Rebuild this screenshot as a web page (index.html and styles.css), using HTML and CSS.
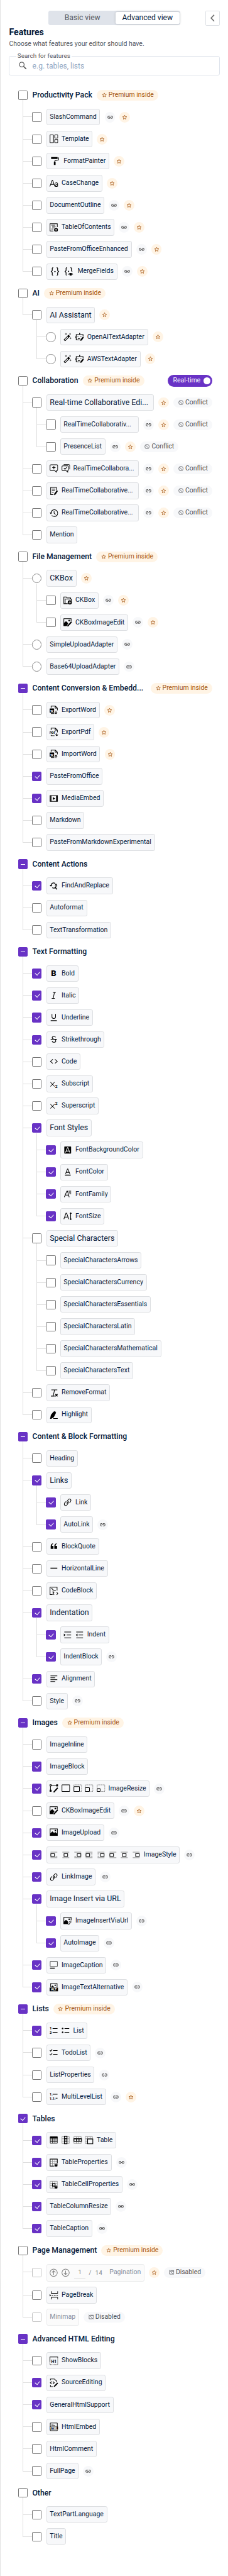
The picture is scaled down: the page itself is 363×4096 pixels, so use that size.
FILE: index.html
```html
<!DOCTYPE html>
<html lang="en">
<head>
<meta charset="utf-8">
<title>Features</title>
<link rel="stylesheet" href="styles.css">
</head>
<body>
<svg class="defs" aria-hidden="true">
<symbol id="star" viewBox="0 0 16 16"><path d="M8 1.8 9.8 6l4.5.4-3.4 3 1 4.4L8 11.400l-3.900 2.400 1-4.400-3.400-3L6.200 6z" stroke-linejoin="round"/></symbol>
<symbol id="dep" viewBox="0 0 16 16"><path d="M7 4.700H4.500a3.300 3.300 0 0 0 0 6.600H7M9 4.700h2.500a3.300 3.300 0 0 1 0 6.600H9M5 8h6"/></symbol>
<symbol id="conflict" viewBox="0 0 16 16"><circle cx="8" cy="8" r="6.800"/><path d="m3.200 3.200 9.600 9.600"/></symbol>
<symbol id="disabled" viewBox="0 0 16 16"><path d="M4.500 2.500h10.700v11M1.700 3v10.700h10.500M.8 1l14 14M7 4.500h8"/></symbol>
<symbol id="search" viewBox="0 0 20 20"><circle cx="7.500" cy="7.500" r="6"/><path d="m12 12 7 7" stroke-width="2.600"/></symbol>
<symbol id="template" viewBox="0 0 20 20"><rect x="1" y=".8" width="8" height="18.200" rx="1"/><rect x="12" y=".8" width="7.200" height="7.200" rx="1"/><rect x="12" y="11.500" width="7.200" height="7.500" rx="1"/></symbol>
<symbol id="painter" viewBox="0 0 20 20"><path d="M1 1h15v4.500H1zM7.500 12h4v8h-4z" fill="#000" stroke="none"/><path d="M16 3h2.500v5l-9 2v3"/></symbol>
<symbol id="case" viewBox="0 0 20 20"><path d="M.5 17 6 2.500h1L12.500 17M2.500 12h8M13.500 9.500c2-2 5.500-1.500 5.500 1V17m0-4.500c-8 0-7 4.500-3.500 4.500 2 0 3.500-1.500 3.500-3"/></symbol>
<symbol id="toc" viewBox="0 0 20 20"><path d="M18 9V1H1v17h8"/><path d="M4 4.500h9M6 7.500h8M6 10.500h6M4 13.500h5" stroke-width="1.200"/><circle cx="15" cy="15.500" r="4.500" fill="#000" stroke="none"/><path d="M15 13v5m-2.500-2.500h5" stroke="#fff" stroke-width="1.200"/></symbol>
<symbol id="merge" viewBox="0 0 20 20"><path d="M6 1C2 1 4.500 4 3.500 8L1 10l2.500 2c1 4-1.500 7 2.500 7M14 1c4 0 1.500 3 2.500 7l2.500 2-2.500 2c-1 4 1.500 7-2.500 7" stroke-width="1.800"/><circle cx="10" cy="10" r="1.700" fill="#000" stroke="none"/></symbol>
<symbol id="mergeprev" viewBox="0 0 20 20"><path d="M6 1C2 1 4.500 4 3.500 8L1 10l2.500 2c1 4-1.500 6 1.500 7M14 1c4 0 1.500 3 2.500 7l1.500 2" stroke-width="1.800"/><circle cx="9.500" cy="9.500" r="1.500" fill="#000" stroke="none"/><path d="M9 17c3-4 8-4 11 0"/><circle cx="14.500" cy="17" r="3" fill="#000" stroke="none"/></symbol>
<symbol id="wand" viewBox="0 0 20 20"><path d="m1.500 16.500 8.500-8.500 2.500 2.500L4 19z"/><path d="m10 8 2-2 2.500 2.500-2 2z" fill="#000"/><path d="M6 1v4M4 3h4M15.500 1v4m-2-2h4M16.500 11v4m-2-2h4" stroke-width="1"/></symbol>
<symbol id="robot" viewBox="0 0 20 20"><path d="M18 8V4.500H2V17h8M10 4V1.500M1 8.500v4" stroke-width="1.600"/><circle cx="10" cy="1.500" r="1.300" fill="#000" stroke="none"/><path d="M6 8v2M13 8v2M6 13c2 1.500 4 1.500 5 0"/><path d="m12 16 6-7 2 2-5 7-3.500 1z" fill="#000" stroke="none"/></symbol>
<symbol id="comment" viewBox="0 0 20 20"><path d="M3 1.500h14a2 2 0 0 1 2 2V13a2 2 0 0 1-2 2h-1v4l-4-4H3a2 2 0 0 1-2-2V3.500a2 2 0 0 1 2-2zM10 4.500v7.500M6.200 8.200h7.600"/></symbol>
<symbol id="comments" viewBox="0 0 20 20"><path d="M3 4h11a2 2 0 0 1 2 2v7a2 2 0 0 1-1.500 2v4l-4-4H3a2 2 0 0 1-2-2V6a2 2 0 0 1 2-2zM5 1.200h12a2.200 2.200 0 0 1 2.200 2.200V12M5.500 9.500l2.500 2.500 4.500-5"/></symbol>
<symbol id="track" viewBox="0 0 20 20"><path d="M16 8V1.500H2.500v17H9M5.500 5.500h8M5.500 9h7M5.500 12.500h4"/><path d="m11 16 6-8 2.500 2-5.500 8-3.500 2z" fill="#000" stroke="none"/></symbol>
<symbol id="history" viewBox="0 0 20 20"><path d="M3 10a8 8 0 1 1 2 5.500M10.500 5v5.500l3.500 3"/><path d="M0 9h6l-3 4z" fill="#000" stroke="none"/></symbol>
<symbol id="ckbox" viewBox="0 0 20 20"><path d="M10 17.500H1V2h6l1.500 2H17v3M4 17V6.500h14.500V11"/><circle cx="15" cy="14.500" r="5" fill="#000" stroke="none"/><path d="M15 11.800v5.400M12.300 14.500h5.400" stroke="#fff" stroke-width="1.200"/></symbol>
<symbol id="imgedit" viewBox="0 0 20 20"><path d="M18 7V1.200H1V17h7"/><circle cx="13.500" cy="5.500" r="2" fill="#000" stroke="none"/><path d="M1 12.500 6 8l4.500 4L7 17.500H1z" fill="#000"/><path d="m9.500 19 9.500-10.500" stroke-width="3"/></symbol>
<symbol id="word" viewBox="0 0 20 20"><path d="M3.500 5V1.200h10L18.200 6v5M13 1.500V6h5M3 18.800h8"/><rect y="6.500" width="10.500" height="10" rx="1" fill="#000" stroke="none"/><text x="5.200" y="14.600" text-anchor="middle" font-size="9" font-weight="700" fill="#fff" stroke="none">w</text></symbol>
<symbol id="expword" viewBox="0 0 20 20"><use href="#word"/><path d="M14.800 12v7m-3-3 3 3.200 3-3.200"/></symbol>
<symbol id="impword" viewBox="0 0 20 20"><use href="#word"/><path d="M14.800 20v-7m-3 3 3-3.200 3 3.200"/></symbol>
<symbol id="exppdf" viewBox="0 0 20 20"><path d="M3.500 6V1.200h10L18.200 6v5M13 1.500V6h5M3.500 17v2h8M16.800 13v6m-3-3 3 3.200 3-3.200"/><text x="-.3" y="14.700" font-size="7.500" font-weight="900" fill="#000" stroke="none">PDF</text></symbol>
<symbol id="media" viewBox="0 0 20 20"><rect x="1" y="3" width="17.500" height="13.500"/><path d="M3 3v13.500M16.500 3v13.500" stroke-width="2.500"/><path d="m7.500 6.500 6 3.300-6 3.300z" fill="#000" stroke="none"/></symbol>
<symbol id="find" viewBox="0 0 20 20"><path d="M3.500 8C4 3 10 1 13 4.500M6 14c4 2 9 1 9.500-5M12.500 13l5 5" stroke-width="2"/><path d="M0 7.500h6.500L3 11.500zM11.500 8.500h6.800L15 4.500z" fill="#000" stroke="none"/></symbol>
<symbol id="bold" viewBox="0 0 20 20"><text x="9.500" y="16.600" text-anchor="middle" font-size="19" font-weight="900" fill="#000" stroke="none">B</text></symbol>
<symbol id="italic" viewBox="0 0 20 20"><path d="M7.500 3h7M5 17h7M11.200 3 8.500 17"/></symbol>
<symbol id="underline" viewBox="0 0 20 20"><path d="M5.500 2v6.500c0 5.500 8.500 5.500 8.500 0V2M2.500 17.500h14.500"/></symbol>
<symbol id="strike" viewBox="0 0 20 20"><path d="M14 5c-1-3-8-3-8 1 0 2 2 3 4 3.500M6 13.500c0 4 8.500 4 8.500 0 0-2-1-3-2.500-3.500M2.500 9.500h15"/></symbol>
<symbol id="code" viewBox="0 0 20 20"><path d="M7.500 5 2 9.800l5.500 4.800M12.500 5 18 9.800l-5.500 4.800"/></symbol>
<symbol id="sub" viewBox="0 0 20 20"><path d="m2 5.500 9.500 10M11.500 5.500 2 15.500"/><text x="13" y="18.500" font-size="10" font-weight="700" fill="#000" stroke="none">2</text></symbol>
<symbol id="sup" viewBox="0 0 20 20"><path d="m2 5.500 9.500 10M11.500 5.500 2 15.500"/><text x="13" y="8" font-size="10" font-weight="700" fill="#000" stroke="none">2</text></symbol>
<symbol id="fbg" viewBox="0 0 20 20"><rect x="2" y="1.500" width="16" height="16.500" rx="1" fill="#000" stroke="none"/><path d="M5 15.500 9.500 4h1L15 15.500M6.500 12h7" stroke="#fff"/></symbol>
<symbol id="fcolor" viewBox="0 0 20 20"><path d="M5 14 9.500 2.500h1L15 14M6.500 10.500h7"/><path d="M3.500 17h13.500" stroke-width="2"/></symbol>
<symbol id="ffam" viewBox="0 0 20 20"><path d="M2 17 8 3h1.500l4 14M4 12h8M12 3h6M13 6h5M14 9h4"/></symbol>
<symbol id="fsize" viewBox="0 0 20 20"><path d="M1 17 6 3h1.500l5 14M3 12h8M17 2.500v15M15 4l2-2 2 2M15 16l2 2 2-2"/></symbol>
<symbol id="remove" viewBox="0 0 20 20"><path d="M4 3h14M11.500 3 8.500 17M3 17.500h9"/><path d="m13.500 13 5 5m0-5-5 5" stroke-width="2"/></symbol>
<symbol id="highl" viewBox="0 0 20 20"><path d="M9 2.500 13 1l2 4-5 10-6 4H1l2-9z" fill="#000" stroke="none"/><path d="M8.500 18.500H19"/></symbol>
<symbol id="link" viewBox="0 0 20 20"><path d="M8 9.500c-1 1 1-3 3-5.500 3.500-4.500 8.500 0 5.500 4.500l-2.300 3M11.500 10c1-1-1 3-3 5.800-3.500 4.500-8.500 0-5.500-4.500l2.500-3M8 13l4-6"/></symbol>
<symbol id="quote" viewBox="0 0 20 20"><path d="M2.500 10c0-4 2-6.500 5.500-7v1.500C6 5.500 5.500 7 5.500 9h3.500v7H2.500zM11 10c0-4 2-6.500 5.500-7v1.500c-2 1-2.500 2.500-2.500 4.500h3.500v7H11z" fill="#000" stroke="none"/></symbol>
<symbol id="hr" viewBox="0 0 20 20"><path d="M2 9.500h16" stroke-width="2"/></symbol>
<symbol id="codeblock" viewBox="0 0 20 20"><path d="M17.500 9V1H1v17.500h6M3 4.500h4M6 7h3M8.500 9.500h6M6.500 12h4M10.500 13 8 16l2.500 3M16.500 13l3 3-3 3"/></symbol>
<symbol id="indent" viewBox="0 0 20 20"><path d="M2 3h16M7.500 9.800H18M2 16.500h16"/><path d="M1 6.500 5 9.800 1 13z" fill="#000" stroke="none"/></symbol>
<symbol id="outdent" viewBox="0 0 20 20"><path d="M2 3h16M7.500 9.800H18M2 16.500h16"/><path d="M5 6.500 1 9.800 5 13z" fill="#000" stroke="none"/></symbol>
<symbol id="align" viewBox="0 0 20 20"><path d="M2 2.500h16M2 7h11M2 11.500h16M2 16h11"/></symbol>
<symbol id="resize" viewBox="0 0 20 20"><path d="M2 2.500h15M2 4v12"/><path d="M15.500.5h4.500v4.500h-4.500zM0 13h4.500v4.500H0z" fill="#000" stroke="none"/><path d="M.8 1.200h3v3h-3z" fill="#fff"/><path d="m9.500 19 9.500-10.500" stroke-width="3"/></symbol>
<symbol id="rfull" viewBox="0 0 20 20"><rect x="1" y="1.500" width="18" height="15.500" rx=".8"/></symbol>
<symbol id="rlarge" viewBox="0 0 20 20"><rect x="1" y="5.500" width="13" height="11.500" rx=".8"/><path d="M1 4V1.500h18V17h-3" stroke-width="1" stroke-dasharray="1 1"/></symbol>
<symbol id="rmed" viewBox="0 0 20 20"><rect x="1" y="8" width="10" height="9" rx=".8"/><path d="M1 6V1.500h18V17h-6" stroke-width="1" stroke-dasharray="1 1"/></symbol>
<symbol id="rsmall" viewBox="0 0 20 20"><rect x="1" y="10.500" width="7" height="6.500" rx=".8"/><path d="M1 8V1.500h18V17h-9" stroke-width="1" stroke-dasharray="1 1"/></symbol>
<symbol id="image" viewBox="0 0 20 20"><rect x="1.200" y="1.500" width="17" height="15.500"/><circle cx="13.500" cy="5.500" r="1.900" fill="#000" stroke="none"/><path d="m1.500 12 5-4.500 4 3.500 3-2 4.500 4v4H1.500z" fill="#000" stroke="none"/></symbol>
<symbol id="s1" viewBox="0 0 20 20"><path d="M2 3h16M2 16h16M14 12.500h4" stroke="#777" stroke-width="1.200"/><rect x="2.800" y="6.500" width="8.500" height="6.500"/></symbol>
<symbol id="s2" viewBox="0 0 20 20"><path d="M2 3h16M2 16h16" stroke="#777" stroke-width="1.200"/><rect x="5.800" y="6.500" width="8.500" height="6.500"/></symbol>
<symbol id="s3" viewBox="0 0 20 20"><path d="M2 3h16M2 16h16M2 12.500h4" stroke="#777" stroke-width="1.200"/><rect x="8.800" y="6.500" width="8.500" height="6.500"/></symbol>
<symbol id="s4" viewBox="0 0 20 20"><path d="M2 3h16M2 16h16M14 6h4M14 9.500h4M14 13h4" stroke="#777" stroke-width="1.200"/><rect x="2.800" y="6.500" width="8.500" height="6.500"/></symbol>
<symbol id="s5" viewBox="0 0 20 20"><path d="M2 3h16M2 16h16M2 6h4M2 9.500h4M2 13h4" stroke="#777" stroke-width="1.200"/><rect x="8.800" y="6.500" width="8.500" height="6.500"/></symbol>
<symbol id="s6" viewBox="0 0 20 20"><path d="M2 3h16M2 16h16" stroke="#777" stroke-width="1.200"/><rect x="2.800" y="6.500" width="8.500" height="6.500"/></symbol>
<symbol id="s8" viewBox="0 0 20 20"><path d="M2 3h16M2 16h16" stroke="#777" stroke-width="1.200"/><rect x="8.800" y="6.500" width="8.500" height="6.500"/></symbol>
<symbol id="imgurl" viewBox="0 0 20 20"><path d="M18 8V1.200H1V16h9"/><circle cx="13.500" cy="5.500" r="1.900" fill="#000" stroke="none"/><path d="M1 12 6 8l4 3v5H1z" fill="#000"/><path d="m13 13 1.500-2.500c1.500-1.500 4 0 3 2l-1.500 2.500M15 14l-1.500 3.500c-1.500 1.500-3.500 0-2.500-2" stroke-width="1.300"/></symbol>
<symbol id="caption" viewBox="0 0 20 20"><rect x="1.300" y="1.300" width="17" height="11.500" rx="1" stroke="#555"/><path d="M1 17h11" stroke-width="2"/></symbol>
<symbol id="alt" viewBox="0 0 20 20"><path d="M2.500 10V1.500h15V10"/><circle cx="13" cy="5.500" r="1.700" fill="#000" stroke="none"/><path d="m4 10 3-3 3 3" fill="#000"/><rect y="11" width="20" height="9" fill="#000" stroke="none"/><text x="10" y="18.300" text-anchor="middle" font-size="8.200" font-weight="700" fill="#fff" stroke="none">ALT</text></symbol>
<symbol id="numlist" viewBox="0 0 20 20"><path d="M7 5h11.500M7 14h11.500"/><text x="0" y="7.500" font-size="8.500" font-weight="800" fill="#000" stroke="none">1</text><text x="0" y="17.500" font-size="8.500" font-weight="800" fill="#000" stroke="none">2</text></symbol>
<symbol id="bullist" viewBox="0 0 20 20"><path d="M7 5h11M7 14h11"/><circle cx="2.500" cy="5" r="1.800" fill="#000" stroke="none"/><circle cx="2.500" cy="14" r="1.800" fill="#000" stroke="none"/></symbol>
<symbol id="todolist" viewBox="0 0 20 20"><path d="M8 5h10.500M8 14h10.500M.5 4.500l2 2 3.500-4M.5 13.500l2 2 3.500-4"/></symbol>
<symbol id="multilist" viewBox="0 0 20 20"><path d="M7 4.500h11.500M14 13.500h4.500"/><text x="0" y="7.500" font-size="8" font-weight="800" fill="#000" stroke="none">1.</text><text x="0" y="17" font-size="8" font-weight="800" fill="#000" stroke="none">1.1.</text></symbol>
<symbol id="grid" viewBox="0 0 20 20"><path d="M1 2h17v16H1zM1 7h17M1 12.500h17M6.700 2v16M12.400 2v16" stroke="#888" stroke-width="1.200"/></symbol>
<symbol id="table" viewBox="0 0 20 20"><path d="M1.500 2.500h16.500v15H1.500zM1.500 10h16.500M1.500 14h16.500M7 6v11.500M12.500 6v11.500" stroke-width="1.300"/><path d="M1 2h17.500v4.500H1z" fill="#000" stroke="none"/></symbol>
<symbol id="tcol" viewBox="0 0 20 20"><use href="#grid"/><path d="M6.700 1h6v18h-6zM6.700 7h6M6.700 12.500h6" stroke-width="1.900"/></symbol>
<symbol id="trow" viewBox="0 0 20 20"><use href="#grid"/><path d="M1 7h18v6H1zM7 7v6M13 7v6" stroke-width="1.900"/></symbol>
<symbol id="tmerge" viewBox="0 0 20 20"><use href="#grid"/><path d="M6.500 7.500h12.500v11.500H6.500z" fill="#f7f8fa" stroke-width="1.900"/></symbol>
<symbol id="tprops" viewBox="0 0 20 20"><use href="#grid"/><path d="M10 18H1.200V1.500H18V11"/><path d="m15 11.500 1.500 3 3.500.3-2.600 2.200.8 3-3.200-1.600-3.200 1.600.8-3-2.600-2.200 3.500-.3z" fill="#000" stroke="none"/></symbol>
<symbol id="tcell" viewBox="0 0 20 20"><use href="#grid"/><path d="M6.700 7.500h6v6h-6z" stroke-width="1.900"/><path d="m15 11.500 1.500 3 3.500.3-2.600 2.200.8 3-3.200-1.600-3.200 1.600.8-3-2.600-2.200 3.500-.3z" fill="#000" stroke="none"/></symbol>
<symbol id="up" viewBox="0 0 20 20"><circle cx="9.500" cy="10" r="8.500"/><path d="M9.500 15V5.500m-4 4 4-4 4 4"/></symbol>
<symbol id="down" viewBox="0 0 20 20"><circle cx="9.500" cy="10" r="8.500"/><path d="M9.500 5v9.500m-4-4 4 4 4-4"/></symbol>
<symbol id="pbreak" viewBox="0 0 20 20"><path d="M4 .5V5h15V.5M4 19.500V14.500h15v5M5 9.800h3.500m2 0H14m2 0h3.500"/><path d="m0 7 3.500 2.800L0 12.500z" fill="#000" stroke="none"/></symbol>
<symbol id="showblocks" viewBox="0 0 20 20"><path d="M.8 13V1h18.400v3"/><path d="M19.200 5v14H.8v-5" stroke-dasharray="1.500 1.500"/><text x="10" y="14" text-anchor="middle" font-size="10" font-weight="700" fill="#000" stroke="none">H1</text></symbol>
<symbol id="source" viewBox="0 0 20 20"><path d="M2 4V1h9l5.500 5v3M2 15v4h6M5 7 1.500 10 5 13M7.500 7l3.500 3-3.500 3"/><path d="m10.500 19 8.500-8.500" stroke-width="3"/></symbol>
<symbol id="htmlembed" viewBox="0 0 20 20"><rect x="1.500" y="1" width="16.500" height="18" rx="1"/><path d="M4 4h5M4 6.500h9" stroke-width="1"/><path d="M0 9.500h20v7H0z" fill="#000" stroke="none"/><text x="10" y="15.600" text-anchor="middle" font-size="6.700" font-weight="800" fill="#fff" stroke="none">HTML</text></symbol>
</svg>
<main>
<header>
<div class="toggle"><span>Basic view</span><span class="on">Advanced view</span></div>
<button class="back"><svg viewBox="0 0 12 20"><path d="M10.500 1 2 10l8.500 9"/></svg></button>
</header>
<h1>Features</h1>
<p>Choose what features your editor should have.</p>
<fieldset><legend>Search for features</legend><svg><use href="#search"/></svg><span>e.g. tables, lists</span></fieldset>

<h2><i></i><span>Productivity Pack</span><em><svg><use href="#star"/></svg>Premium inside</em></h2>
<ul>
<li><div><i></i><span>SlashCommand</span><svg class="dep"><use href="#dep"/></svg><svg class="star"><use href="#star"/></svg></div></li>
<li><div><i></i><span><svg><use href="#template"/></svg>Template</span><svg class="star"><use href="#star"/></svg></div></li>
<li><div><i></i><span class="wide"><svg><use href="#painter"/></svg>FormatPainter</span><svg class="star"><use href="#star"/></svg></div></li>
<li><div><i></i><span><svg><use href="#case"/></svg>CaseChange</span><svg class="star"><use href="#star"/></svg></div></li>
<li><div><i></i><span>DocumentOutline</span><svg class="dep"><use href="#dep"/></svg><svg class="star"><use href="#star"/></svg></div></li>
<li><div><i></i><span><svg><use href="#toc"/></svg>TableOfContents</span><svg class="dep"><use href="#dep"/></svg><svg class="star"><use href="#star"/></svg></div></li>
<li><div><i></i><span>PasteFromOfficeEnhanced</span><svg class="dep"><use href="#dep"/></svg><svg class="star"><use href="#star"/></svg></div></li>
<li><div><i></i><span class="wide"><svg><use href="#merge"/></svg><svg><use href="#mergeprev"/></svg>MergeFields</span><svg class="dep"><use href="#dep"/></svg><svg class="star"><use href="#star"/></svg></div></li>
</ul>

<h2><i></i><span>AI</span><em><svg><use href="#star"/></svg>Premium inside</em></h2>
<ul>
<li><div><i></i><span class="group">AI Assistant</span><svg class="star"><use href="#star"/></svg></div>
<ul>
<li><div><i class="radio"></i><span><svg><use href="#wand"/></svg><svg><use href="#robot"/></svg>OpenAITextAdapter</span><svg class="star"><use href="#star"/></svg></div></li>
<li><div><i class="radio"></i><span><svg><use href="#wand"/></svg><svg><use href="#robot"/></svg>AWSTextAdapter</span><svg class="star"><use href="#star"/></svg></div></li>
</ul></li>
</ul>

<h2><i></i><span>Collaboration</span><em><svg><use href="#star"/></svg>Premium inside</em><strong>Real-time<b></b></strong></h2>
<ul>
<li><div><i></i><span class="group fill">Real-time Collaborative Edi...</span><svg class="star"><use href="#star"/></svg><em class="gray"><svg><use href="#conflict"/></svg>Conflict</em></div>
<ul>
<li><div><i></i><span class="fill">RealTimeCollaborativ...</span><svg class="dep"><use href="#dep"/></svg><svg class="star"><use href="#star"/></svg><em class="gray"><svg><use href="#conflict"/></svg>Conflict</em></div></li>
<li><div><i></i><span>PresenceList</span><svg class="dep"><use href="#dep"/></svg><svg class="star"><use href="#star"/></svg><em class="gray"><svg><use href="#conflict"/></svg>Conflict</em></div></li>
</ul></li>
<li><div><i></i><span class="fill"><svg><use href="#comment"/></svg><svg><use href="#comments"/></svg>RealTimeCollabora...</span><svg class="dep"><use href="#dep"/></svg><svg class="star"><use href="#star"/></svg><em class="gray"><svg><use href="#conflict"/></svg>Conflict</em></div></li>
<li><div><i></i><span class="fill"><svg><use href="#track"/></svg>RealTimeCollaborative...</span><svg class="dep"><use href="#dep"/></svg><svg class="star"><use href="#star"/></svg><em class="gray"><svg><use href="#conflict"/></svg>Conflict</em></div></li>
<li><div><i></i><span class="fill"><svg><use href="#history"/></svg>RealTimeCollaborative...</span><svg class="dep"><use href="#dep"/></svg><svg class="star"><use href="#star"/></svg><em class="gray"><svg><use href="#conflict"/></svg>Conflict</em></div></li>
<li><div><i></i><span>Mention</span></div></li>
</ul>

<h2><i></i><span>File Management</span><em><svg><use href="#star"/></svg>Premium inside</em></h2>
<ul>
<li><div><i class="radio"></i><span class="group">CKBox</span><svg class="star"><use href="#star"/></svg></div>
<ul>
<li><div><i></i><span><svg><use href="#ckbox"/></svg>CKBox</span><svg class="dep"><use href="#dep"/></svg><svg class="star"><use href="#star"/></svg></div></li>
<li><div><i></i><span><svg><use href="#imgedit"/></svg>CKBoxImageEdit</span><svg class="dep"><use href="#dep"/></svg><svg class="star"><use href="#star"/></svg></div></li>
</ul></li>
<li><div><i class="radio"></i><span>SimpleUploadAdapter</span><svg class="dep"><use href="#dep"/></svg></div></li>
<li><div><i class="radio"></i><span>Base64UploadAdapter</span><svg class="dep"><use href="#dep"/></svg></div></li>
</ul>

<h2><i class="some"></i><span>Content Conversion &amp; Embedd...</span><em class="end"><svg><use href="#star"/></svg>Premium inside</em></h2>
<ul>
<li><div><i></i><span><svg><use href="#expword"/></svg>ExportWord</span><svg class="star"><use href="#star"/></svg></div></li>
<li><div><i></i><span><svg><use href="#exppdf"/></svg>ExportPdf</span><svg class="star"><use href="#star"/></svg></div></li>
<li><div><i></i><span><svg><use href="#impword"/></svg>ImportWord</span><svg class="star"><use href="#star"/></svg></div></li>
<li><div><i class="all"></i><span>PasteFromOffice</span></div></li>
<li><div><i class="all"></i><span><svg><use href="#media"/></svg>MediaEmbed</span></div></li>
<li><div><i></i><span>Markdown</span></div></li>
<li><div><i></i><span>PasteFromMarkdownExperimental</span></div></li>
</ul>

<h2><i class="some"></i><span>Content Actions</span></h2>
<ul>
<li><div><i class="all"></i><span><svg><use href="#find"/></svg>FindAndReplace</span></div></li>
<li><div><i></i><span>Autoformat</span></div></li>
<li><div><i></i><span>TextTransformation</span></div></li>
</ul>

<h2><i class="some"></i><span>Text Formatting</span></h2>
<ul>
<li><div><i class="all"></i><span><svg><use href="#bold"/></svg>Bold</span></div></li>
<li><div><i class="all"></i><span><svg><use href="#italic"/></svg>Italic</span></div></li>
<li><div><i class="all"></i><span><svg><use href="#underline"/></svg>Underline</span></div></li>
<li><div><i class="all"></i><span><svg><use href="#strike"/></svg>Strikethrough</span></div></li>
<li><div><i></i><span><svg><use href="#code"/></svg>Code</span></div></li>
<li><div><i></i><span><svg><use href="#sub"/></svg>Subscript</span></div></li>
<li><div><i></i><span><svg><use href="#sup"/></svg>Superscript</span></div></li>
<li><div><i class="all"></i><span class="group">Font Styles</span></div>
<ul>
<li><div><i class="all"></i><span><svg><use href="#fbg"/></svg>FontBackgroundColor</span></div></li>
<li><div><i class="all"></i><span><svg><use href="#fcolor"/></svg>FontColor</span></div></li>
<li><div><i class="all"></i><span><svg><use href="#ffam"/></svg>FontFamily</span></div></li>
<li><div><i class="all"></i><span><svg><use href="#fsize"/></svg>FontSize</span></div></li>
</ul></li>
<li><div><i></i><span class="group">Special Characters</span></div>
<ul>
<li><div><i></i><span>SpecialCharactersArrows</span></div></li>
<li><div><i></i><span>SpecialCharactersCurrency</span></div></li>
<li><div><i></i><span>SpecialCharactersEssentials</span></div></li>
<li><div><i></i><span>SpecialCharactersLatin</span></div></li>
<li><div><i></i><span>SpecialCharactersMathematical</span></div></li>
<li><div><i></i><span>SpecialCharactersText</span></div></li>
</ul></li>
<li><div><i></i><span><svg><use href="#remove"/></svg>RemoveFormat</span></div></li>
<li><div><i></i><span><svg><use href="#highl"/></svg>Highlight</span></div></li>
</ul>

<h2><i class="some"></i><span>Content &amp; Block Formatting</span></h2>
<ul>
<li><div><i></i><span>Heading</span></div></li>
<li><div><i class="all"></i><span class="group">Links</span></div>
<ul>
<li><div><i class="all"></i><span><svg><use href="#link"/></svg>Link</span></div></li>
<li><div><i class="all"></i><span>AutoLink</span><svg class="dep"><use href="#dep"/></svg></div></li>
</ul></li>
<li><div><i></i><span><svg><use href="#quote"/></svg>BlockQuote</span></div></li>
<li><div><i></i><span><svg><use href="#hr"/></svg>HorizontalLine</span></div></li>
<li><div><i></i><span><svg><use href="#codeblock"/></svg>CodeBlock</span></div></li>
<li><div><i class="all"></i><span class="group">Indentation</span></div>
<ul>
<li><div><i class="all"></i><span><svg><use href="#indent"/></svg><svg><use href="#outdent"/></svg>Indent</span></div></li>
<li><div><i class="all"></i><span>IndentBlock</span><svg class="dep"><use href="#dep"/></svg></div></li>
</ul></li>
<li><div><i class="all"></i><span><svg><use href="#align"/></svg>Alignment</span></div></li>
<li><div><i></i><span>Style</span><svg class="dep"><use href="#dep"/></svg></div></li>
</ul>

<h2><i class="some"></i><span>Images</span><em><svg><use href="#star"/></svg>Premium inside</em></h2>
<ul>
<li><div><i></i><span>ImageInline</span></div></li>
<li><div><i class="all"></i><span>ImageBlock</span></div></li>
<li><div><i class="all"></i><span><svg><use href="#resize"/></svg><svg><use href="#rfull"/></svg><svg><use href="#rlarge"/></svg><svg><use href="#rmed"/></svg><svg><use href="#rsmall"/></svg>ImageResize</span><svg class="dep"><use href="#dep"/></svg></div></li>
<li><div><i></i><span><svg><use href="#imgedit"/></svg>CKBoxImageEdit</span><svg class="dep"><use href="#dep"/></svg><svg class="star"><use href="#star"/></svg></div></li>
<li><div><i class="all"></i><span><svg><use href="#image"/></svg>ImageUpload</span><svg class="dep"><use href="#dep"/></svg></div></li>
<li><div><i class="all"></i><span><svg><use href="#s1"/></svg><svg><use href="#s2"/></svg><svg><use href="#s3"/></svg><svg><use href="#s4"/></svg><svg><use href="#s5"/></svg><svg><use href="#s6"/></svg><svg><use href="#s2"/></svg><svg><use href="#s8"/></svg>ImageStyle</span><svg class="dep"><use href="#dep"/></svg></div></li>
<li><div><i class="all"></i><span><svg><use href="#link"/></svg>LinkImage</span><svg class="dep"><use href="#dep"/></svg></div></li>
<li><div><i class="all"></i><span class="group">Image Insert via URL</span></div>
<ul>
<li><div><i class="all"></i><span><svg><use href="#imgurl"/></svg>ImageInsertViaUrl</span><svg class="dep"><use href="#dep"/></svg></div></li>
<li><div><i class="all"></i><span>AutoImage</span><svg class="dep"><use href="#dep"/></svg></div></li>
</ul></li>
<li><div><i class="all"></i><span><svg><use href="#caption"/></svg>ImageCaption</span><svg class="dep"><use href="#dep"/></svg></div></li>
<li><div><i class="all"></i><span><svg><use href="#alt"/></svg>ImageTextAlternative</span><svg class="dep"><use href="#dep"/></svg></div></li>
</ul>

<h2><i class="some"></i><span>Lists</span><em><svg><use href="#star"/></svg>Premium inside</em></h2>
<ul>
<li><div><i class="all"></i><span><svg><use href="#numlist"/></svg><svg><use href="#bullist"/></svg>List</span></div></li>
<li><div><i></i><span><svg><use href="#todolist"/></svg>TodoList</span><svg class="dep"><use href="#dep"/></svg></div></li>
<li><div><i></i><span>ListProperties</span><svg class="dep"><use href="#dep"/></svg></div></li>
<li><div><i></i><span><svg><use href="#multilist"/></svg>MultiLevelList</span><svg class="dep"><use href="#dep"/></svg><svg class="star"><use href="#star"/></svg></div></li>
</ul>

<h2><i class="all"></i><span>Tables</span></h2>
<ul>
<li><div><i class="all"></i><span><svg><use href="#table"/></svg><svg><use href="#tcol"/></svg><svg><use href="#trow"/></svg><svg><use href="#tmerge"/></svg>Table</span></div></li>
<li><div><i class="all"></i><span><svg><use href="#tprops"/></svg>TableProperties</span><svg class="dep"><use href="#dep"/></svg></div></li>
<li><div><i class="all"></i><span><svg><use href="#tcell"/></svg>TableCellProperties</span><svg class="dep"><use href="#dep"/></svg></div></li>
<li><div><i class="all"></i><span>TableColumnResize</span><svg class="dep"><use href="#dep"/></svg></div></li>
<li><div><i class="all"></i><span>TableCaption</span><svg class="dep"><use href="#dep"/></svg></div></li>
</ul>

<h2><i></i><span>Page Management</span><em><svg><use href="#star"/></svg>Premium inside</em></h2>
<ul>
<li><div class="off tall"><i></i><span><svg><use href="#up"/></svg><svg><use href="#down"/></svg><u>1</u><small>/&nbsp; 14</small>Pagination</span><svg class="star"><use href="#star"/></svg><em class="gray"><svg><use href="#disabled"/></svg>Disabled</em></div></li>
<li><div><i></i><span><svg><use href="#pbreak"/></svg>PageBreak</span></div></li>
<li><div class="off"><i></i><span>Minimap</span><em class="gray"><svg><use href="#disabled"/></svg>Disabled</em></div></li>
</ul>

<h2><i class="some"></i><span>Advanced HTML Editing</span></h2>
<ul>
<li><div><i></i><span><svg><use href="#showblocks"/></svg>ShowBlocks</span></div></li>
<li><div><i class="all"></i><span><svg><use href="#source"/></svg>SourceEditing</span></div></li>
<li><div><i class="all"></i><span>GeneralHtmlSupport</span></div></li>
<li><div><i></i><span><svg><use href="#htmlembed"/></svg>HtmlEmbed</span></div></li>
<li><div><i></i><span>HtmlComment</span></div></li>
<li><div><i></i><span>FullPage</span><svg class="dep"><use href="#dep"/></svg></div></li>
</ul>

<h2><i></i><span>Other</span></h2>
<ul>
<li><div><i></i><span>TextPartLanguage</span></div></li>
<li><div><i></i><span>Title</span></div></li>
</ul>
</main>
</body>
</html>
```
FILE: styles.css
```css
/* 1rem = 100 design pixels */
html { font-size: 56.614px; background: #fff; }
* { box-sizing: border-box; }
body { margin: 0; font-family: Roboto, "Liberation Sans", sans-serif; font-size: .186rem; color: #061a3a; line-height: 1; overflow: hidden; }
.defs { display: none; }
main { height: 4096px; border-left: 1px solid #e2e2e2; padding: .3rem .225rem 0 .237rem; }
svg { fill: none; stroke: currentColor; stroke-width: 1.5; flex: none; overflow: visible; }

header { display: flex; justify-content: flex-end; height: .42rem; }
.toggle { display: flex; width: 3.72rem; height: .4rem; padding: .035rem .03rem; background: #dfe3ea; border-radius: .06rem; font-size: .214rem; color: #55585e; margin-right: .69rem; }
.toggle span { flex: 1; display: flex; align-items: center; justify-content: center; white-space: nowrap; }
.toggle .on { flex: 0 0 1.8rem; background: #fff; border-radius: .05rem; color: #061a3a; box-shadow: 0 0 .07rem #0003; }
.back { width: .42rem; height: .42rem; padding: 0; border: 1px solid #dfe2e6; border-radius: .03rem; background: #fff; color: #707070; display: flex; align-items: center; justify-content: center; }
.back svg { width: .12rem; height: .2rem; stroke-width: 3; }

h1 { margin: .07rem 0 0; font-size: .25rem; line-height: .24rem; font-weight: 700; }
p { margin: .08rem 0 0; font-size: .185rem; line-height: .24rem; color: #55585e; }
fieldset { margin: .14rem 0 0; padding: 0 0 .08rem .25rem; height: .635rem; border: 1px solid #dfe4ec; border-radius: .05rem; display: flex; align-items: center; gap: .17rem; color: #93a8c3; font-size: .212rem; min-width: 0; }
legend { margin-left: -.07rem; padding: 0 .04rem; font-size: .175rem; line-height: .18rem; color: #55585e; }
fieldset svg { width: .22rem; height: .22rem; color: #555; stroke-width: 1.9; }

h2 { margin: 0; height: .6rem; display: flex; align-items: center; gap: .124rem; font-size: .216rem; font-weight: 500; padding: 0 .22rem 0 .26rem; white-space: nowrap; }
fieldset + h2 { margin-top: .253rem; }
ul { list-style: none; margin: 0; padding: 0 0 0 .65rem; }
ul ul { padding-left: .39rem; }
li { position: relative; }
li > div { display: flex; align-items: center; height: .62rem; gap: .124rem; padding-right: .22rem; }
li > .tall { height: .65rem; }

/* tree connectors */
li::before, li::after { content: ""; position: absolute; left: -.265rem; }
li::before { top: 0; bottom: 0; width: 1px; background: #dcdcdc; }
li::after { top: .3rem; width: .265rem; height: 1px; background: #dedede; }
li:first-child::before { top: -.165rem; }
li:last-child::before { bottom: auto; height: .31rem; }
li:first-child:last-child::before { height: .475rem; }

/* checkboxes */
i { flex: none; width: .27rem; height: .27rem; border: 1px solid #777; border-radius: .03rem; background: #fff; display: flex; align-items: center; justify-content: center; position: relative; z-index: 1; }
.radio { border-radius: 50%; border-color: #8c8c8c; }
.some, .all { background: #6832c5; border-color: #6832c5; }
.some::after { content: ""; width: .12rem; height: 1px; background: #fff; }
.all::after { content: ""; width: .065rem; height: .11rem; border: solid #fff; border-width: 0 1px 1px 0; transform: translateY(-.01rem) rotate(40deg); }

/* feature chips */
li span { height: .466rem; display: flex; align-items: center; gap: .09rem; padding: 0 .084rem; border: 1px solid #dddfe2; border-radius: .05rem; background: #f7f8fa; white-space: nowrap; }
li span svg { width: .24rem; height: .24rem; color: #000; }
.wide svg { width: .3rem; padding: 0 .03rem; }
.group { font-size: .219rem; }
.fill { flex: 1; }
.tall span { height: .495rem; }
.off i { border-color: #c4c4c4; }
.off span { background: #fbfbfb; border-color: #eaebec; color: #858e9d; }
.off span svg { color: #808080; }
u { width: .33rem; height: .34rem; margin-left: .02rem; text-align: center; line-height: .32rem; font-size: .165rem; text-decoration: none; border-bottom: 1px solid #e0e0e0; color: #808080; }
small { width: .4rem; font-size: .165rem; color: #808080; letter-spacing: .01rem; margin-right: .09rem; }

/* badges */
.dep, .star { width: .3rem; height: .3rem; padding: .07rem; border-radius: 50%; }
.dep { background: #f7f8fa; color: #555; stroke-width: 1.8; }
.star { background: #fff4e5; color: #a45512; padding: .075rem; }
em { flex: none; display: flex; align-items: center; gap: .05rem; height: .3rem; padding: 0 .124rem 0 .136rem; border-radius: .15rem; background: #fff4e5; color: #a45512; font: 400 .184rem/1 Roboto, sans-serif; }
em svg { width: .145rem; height: .145rem; }
.end { margin-left: auto; }
.gray { background: #f7f8fa; color: #505358; }
strong { margin-left: auto; display: flex; align-items: center; gap: .09rem; height: .33rem; padding: 0 .055rem 0 .15rem; border-radius: .17rem; background: #6832c5; color: #fff; font: 400 .184rem/1 Roboto, sans-serif; }
strong b { width: .185rem; height: .185rem; border-radius: 50%; background: #fff; }
```
